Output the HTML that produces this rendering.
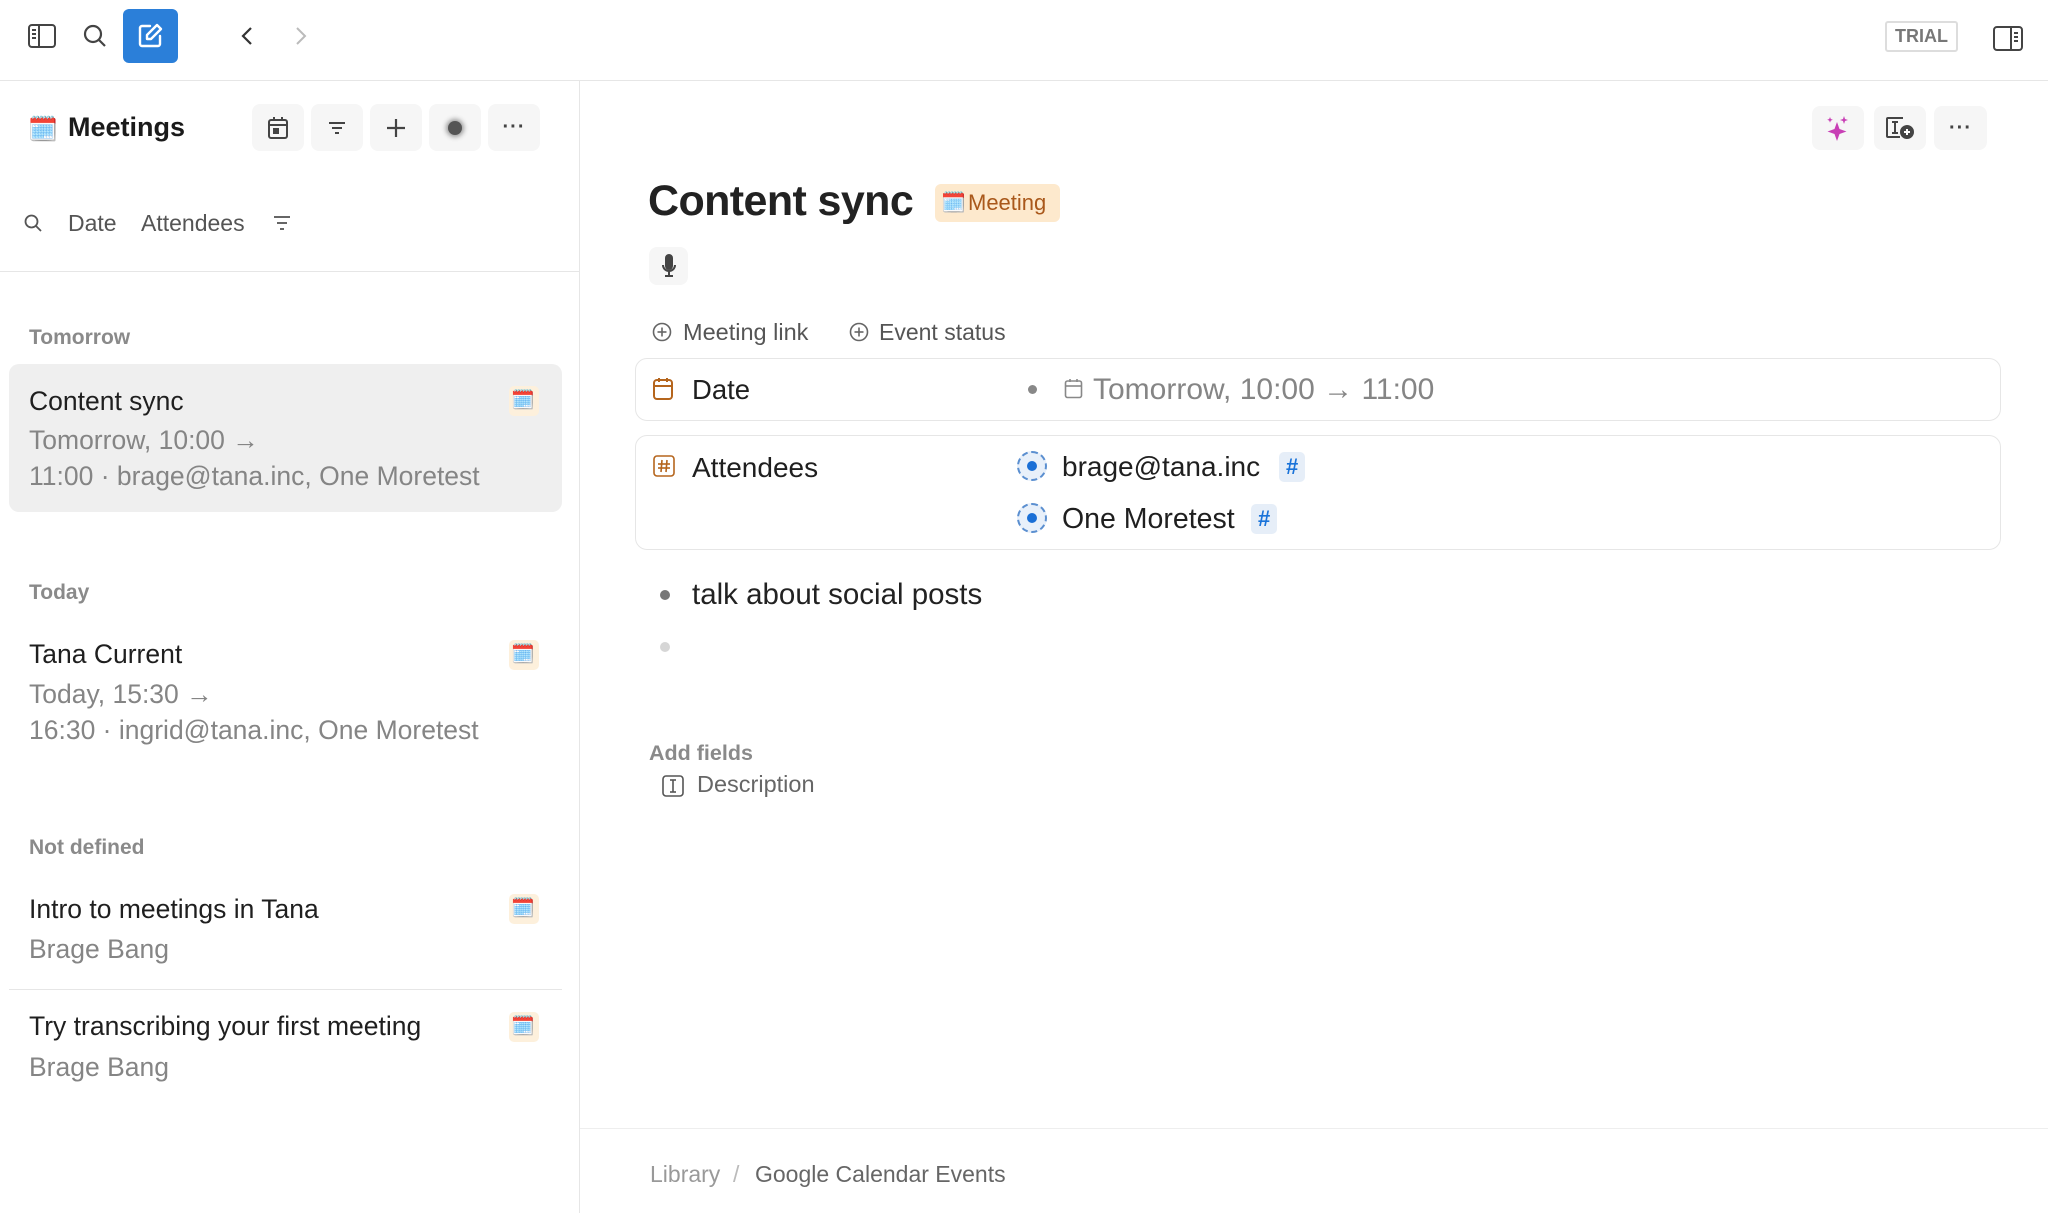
<!DOCTYPE html>
<html><head><meta charset="utf-8"><style>
*{margin:0;padding:0;box-sizing:border-box}
body{width:2048px;height:1213px;background:#fff;font-family:"Liberation Sans",sans-serif;color:#1f1f1f;position:relative;overflow:hidden}
.a{position:absolute;white-space:nowrap}
.btn{position:absolute;background:#f6f6f6;border-radius:8px;display:flex;align-items:center;justify-content:center}
.sec{font-size:21px;font-weight:bold;color:#8a8a8a}
.ttl{font-size:26.5px;color:#1f1f1f}
.sub{font-size:26.5px;color:#858585}
.cal{position:absolute;width:30px;height:30px;background:#fdf0dc;border-radius:5px}
.tag{display:inline-block;background:#e6eef8;color:#1a73d9;font-size:22px;border-radius:5px;padding:2px 7px;font-weight:bold}
</style></head><body>
<svg class="a" style="left:28px;top:24px" width="28" height="24" viewBox="0 0 28 24" fill="none" stroke="#444" stroke-width="2"><rect x="1" y="1" width="26" height="22" rx="3"/><line x1="11" y1="1" x2="11" y2="23"/><line x1="4" y1="6" x2="8" y2="6"/><line x1="4" y1="10" x2="8" y2="10"/><line x1="4" y1="14" x2="8" y2="14"/></svg>
<svg class="a" style="left:83px;top:24px" width="24" height="24" viewBox="0 0 24 24" fill="none" stroke="#444" stroke-width="2.2"><circle cx="10" cy="10" r="8"/><line x1="16" y1="16" x2="22" y2="22"/></svg>
<div class="a" style="left:123px;top:9px;width:55px;height:54px;background:#2b7fd9;border-radius:6px"></div>
<svg class="a" style="left:136px;top:22px" width="28" height="28" viewBox="0 0 28 28" fill="none" stroke="#fff" stroke-width="2.4" stroke-linecap="round" stroke-linejoin="round"><path d="M14 4H6a2 2 0 0 0-2 2v16a2 2 0 0 0 2 2h16a2 2 0 0 0 2-2v-8"/><path d="M21 3l4 4-10 10h-4v-4z"/></svg>
<svg class="a" style="left:240px;top:26px" width="14" height="20" viewBox="0 0 14 20" fill="none" stroke="#333" stroke-width="2.2"><path d="M11 2L3 10l8 8"/></svg>
<svg class="a" style="left:294px;top:26px" width="14" height="20" viewBox="0 0 14 20" fill="none" stroke="#bbb" stroke-width="2"><path d="M3 2l8 8-8 8"/></svg>
<div class="a" style="left:1885px;top:21px;width:73px;height:31px;border:2px solid #ddd;border-radius:3px;font-size:18px;font-weight:bold;color:#777;text-align:center;line-height:27px">TRIAL</div>
<svg class="a" style="left:1993px;top:26px" width="30" height="25" viewBox="0 0 30 25" fill="none" stroke="#444" stroke-width="2"><rect x="1" y="1" width="28" height="23" rx="3"/><line x1="18" y1="1" x2="18" y2="24"/><line x1="21" y1="7" x2="25" y2="7"/><line x1="21" y1="11" x2="25" y2="11"/><line x1="21" y1="15" x2="25" y2="15"/></svg>
<div class="a" style="left:0;top:80px;width:2048px;height:1px;background:#e6e6e6"></div>
<div class="a" style="left:579px;top:81px;width:1px;height:1132px;background:#e6e6e6"></div>

<div class="a" style="left:28px;top:115px;font-size:24px">🗓️</div>
<div class="a" style="left:68px;top:112px;font-size:27px;font-weight:bold;color:#1a1a1a">Meetings</div>
<div class="btn" style="left:252px;top:104px;width:52px;height:47px"><svg width="22" height="24" viewBox="0 0 22 24" fill="none" stroke="#444" stroke-width="2"><rect x="2" y="4" width="18" height="18" rx="2"/><line x1="2" y1="9" x2="20" y2="9"/><line x1="7" y1="1" x2="7" y2="5"/><line x1="15" y1="1" x2="15" y2="5"/><rect x="7" y="13" width="4" height="4" fill="#444"/></svg></div>
<div class="btn" style="left:311px;top:104px;width:52px;height:47px"><svg width="20" height="16" viewBox="0 0 20 16" stroke="#444" stroke-width="2"><line x1="2" y1="3" x2="18" y2="3"/><line x1="5" y1="8" x2="15" y2="8"/><line x1="8" y1="13" x2="12" y2="13"/></svg></div>
<div class="btn" style="left:370px;top:104px;width:52px;height:47px"><svg width="22" height="22" viewBox="0 0 22 22" stroke="#444" stroke-width="2.2"><line x1="11" y1="2" x2="11" y2="20"/><line x1="2" y1="11" x2="20" y2="11"/></svg></div>
<div class="btn" style="left:429px;top:104px;width:52px;height:47px"><div style="width:14px;height:14px;border-radius:50%;background:#555;box-shadow:0 0 5px 2px #999"></div></div>
<div class="btn" style="left:488px;top:104px;width:52px;height:47px;font-size:20px;color:#444;font-weight:bold;letter-spacing:1px">···</div>

<svg class="a" style="left:24px;top:214px" width="18" height="18" viewBox="0 0 18 18" fill="none" stroke="#555" stroke-width="1.8"><circle cx="7.5" cy="7.5" r="6"/><line x1="12" y1="12" x2="17" y2="17"/></svg>
<div class="a" style="left:68px;top:210px;font-size:23px;color:#555">Date</div>
<div class="a" style="left:141px;top:210px;font-size:23px;color:#555">Attendees</div>
<svg class="a" style="left:272px;top:215px" width="20" height="16" viewBox="0 0 20 16" stroke="#555" stroke-width="1.8"><line x1="2" y1="2" x2="18" y2="2"/><line x1="5" y1="8" x2="15" y2="8"/><line x1="8" y1="14" x2="12" y2="14"/></svg>
<div class="a" style="left:0;top:271px;width:579px;height:1px;background:#e6e6e6"></div>

<div class="a sec" style="left:29px;top:326px">Tomorrow</div>
<div class="a" style="left:9px;top:364px;width:553px;height:148px;background:#efefef;border-radius:10px"></div>
<div class="a ttl" style="left:29px;top:386px">Content sync</div>
<div class="a sub" style="left:29px;top:425px">Tomorrow, 10:00 →</div>
<div class="a sub" style="left:29px;top:461px">11:00 · brage@tana.inc, One Moretest</div>
<div class="cal" style="left:509px;top:386px"></div><div class="a" style="left:511px;top:388px;font-size:19px">🗓️</div>

<div class="a sec" style="left:29px;top:581px">Today</div>
<div class="a ttl" style="left:29px;top:639px">Tana Current</div>
<div class="a sub" style="left:29px;top:679px">Today, 15:30 →</div>
<div class="a sub" style="left:29px;top:715px">16:30 · ingrid@tana.inc, One Moretest</div>
<div class="cal" style="left:509px;top:640px"></div><div class="a" style="left:511px;top:642px;font-size:19px">🗓️</div>

<div class="a sec" style="left:29px;top:836px">Not defined</div>
<div class="a ttl" style="left:29px;top:894px">Intro to meetings in Tana</div>
<div class="a sub" style="left:29px;top:934px">Brage Bang</div>
<div class="cal" style="left:509px;top:894px"></div><div class="a" style="left:511px;top:896px;font-size:19px">🗓️</div>
<div class="a" style="left:9px;top:989px;width:553px;height:1px;background:#e6e6e6"></div>
<div class="a ttl" style="left:29px;top:1011px">Try transcribing your first meeting</div>
<div class="a sub" style="left:29px;top:1052px">Brage Bang</div>
<div class="cal" style="left:509px;top:1012px"></div><div class="a" style="left:511px;top:1014px;font-size:19px">🗓️</div>

<div class="btn" style="left:1812px;top:106px;width:52px;height:44px"><svg width="26" height="28" viewBox="0 0 26 28" fill="#c83fb5"><path d="M12 8l2.5 7 7 2.5-7 2.5L12 27l-2.5-7-7-2.5 7-2.5z"/><path d="M19 2l1 3 3 1-3 1-1 3-1-3-3-1 3-1z"/><path d="M5 3l.8 2 2 .8-2 .8L5 8.6 4.2 6.6l-2-.8 2-.8z"/></svg></div>
<div class="btn" style="left:1874px;top:106px;width:52px;height:44px"><svg width="30" height="24" viewBox="0 0 30 24" fill="none" stroke="#444" stroke-width="2"><path d="M18 2H3a1 1 0 0 0-1 1v17a1 1 0 0 0 1 1h12"/><line x1="7" y1="6" x2="13" y2="6"/><line x1="10" y1="6" x2="10" y2="17"/><line x1="7" y1="17" x2="13" y2="17"/><circle cx="22" cy="16" r="6" fill="#444"/><line x1="22" y1="13" x2="22" y2="19" stroke="#fff"/><line x1="19" y1="16" x2="25" y2="16" stroke="#fff"/></svg></div>
<div class="btn" style="left:1934px;top:106px;width:53px;height:44px;font-size:20px;color:#444;font-weight:bold;letter-spacing:1px">···</div>

<div class="a" style="left:648px;top:177px;font-size:43px;font-weight:bold;color:#222;letter-spacing:-0.6px">Content sync</div>
<div class="a" style="left:935px;top:184px;width:125px;height:38px;background:#fde9cd;border-radius:6px"></div>
<div class="a" style="left:941px;top:190px;font-size:20px">🗓️</div>
<div class="a" style="left:968px;top:190px;font-size:22px;color:#a9581b">Meeting</div>
<div class="btn" style="left:649px;top:247px;width:39px;height:38px"><svg width="16" height="24" viewBox="0 0 16 24" fill="none" stroke="#444" stroke-width="2"><rect x="5" y="1" width="6" height="14" rx="3" fill="#444"/><path d="M2 11a6 6 0 0 0 12 0"/><line x1="8" y1="17" x2="8" y2="22"/><line x1="4" y1="22" x2="12" y2="22"/></svg></div>

<svg class="a" style="left:652px;top:322px" width="20" height="20" viewBox="0 0 20 20" fill="none" stroke="#666" stroke-width="1.6"><circle cx="10" cy="10" r="8.5"/><line x1="10" y1="5.5" x2="10" y2="14.5"/><line x1="5.5" y1="10" x2="14.5" y2="10"/></svg>
<div class="a" style="left:683px;top:319px;font-size:23.5px;color:#555">Meeting link</div>
<svg class="a" style="left:849px;top:322px" width="20" height="20" viewBox="0 0 20 20" fill="none" stroke="#666" stroke-width="1.6"><circle cx="10" cy="10" r="8.5"/><line x1="10" y1="5.5" x2="10" y2="14.5"/><line x1="5.5" y1="10" x2="14.5" y2="10"/></svg>
<div class="a" style="left:879px;top:319px;font-size:23px;color:#555">Event status</div>

<div class="a" style="left:635px;top:358px;width:1366px;height:63px;border:1px solid #e6e6e6;border-radius:12px"></div>
<svg class="a" style="left:652px;top:377px" width="22" height="24" viewBox="0 0 22 24" fill="none" stroke="#b5651d" stroke-width="2"><rect x="2" y="3" width="18" height="19" rx="3"/><line x1="2" y1="9" x2="20" y2="9"/><line x1="7" y1="1" x2="7" y2="5"/><line x1="15" y1="1" x2="15" y2="5"/></svg>
<div class="a" style="left:692px;top:374px;font-size:27.5px;color:#1f1f1f">Date</div>
<div class="a" style="left:1028px;top:385px;width:9px;height:9px;border-radius:50%;background:#888"></div>
<svg class="a" style="left:1064px;top:378px" width="19" height="21" viewBox="0 0 19 21" fill="none" stroke="#888" stroke-width="1.6"><rect x="1.5" y="3" width="16" height="16.5" rx="2"/><line x1="1.5" y1="8" x2="17.5" y2="8"/><line x1="6" y1="1" x2="6" y2="4"/><line x1="13" y1="1" x2="13" y2="4"/></svg>
<div class="a" style="left:1093px;top:373px;font-size:30px;color:#858585">Tomorrow, 10:00 → 11:00</div>

<div class="a" style="left:635px;top:435px;width:1366px;height:115px;border:1px solid #e6e6e6;border-radius:12px"></div>
<svg class="a" style="left:653px;top:455px" width="22" height="22" viewBox="0 0 22 22" fill="none" stroke="#b5651d" stroke-width="1.6"><rect x="1" y="1" width="20" height="20" rx="3"/><line x1="9" y1="5" x2="8" y2="17"/><line x1="14" y1="5" x2="13" y2="17"/><line x1="5" y1="9" x2="17" y2="9"/><line x1="5" y1="13" x2="17" y2="13"/></svg>
<div class="a" style="left:692px;top:452px;font-size:28px;color:#1f1f1f">Attendees</div>
<div class="a" style="left:1017px;top:451px;width:30px;height:30px;border-radius:50%;border:2px dashed #5b8fd0;background:#e8f0fa"></div>
<div class="a" style="left:1027px;top:461px;width:10px;height:10px;border-radius:50%;background:#1a6fd6"></div>
<div class="a" style="left:1062px;top:451px;font-size:28px;color:#1f1f1f">brage@tana.inc</div>
<div class="a" style="left:1279px;top:452px"><span class="tag">#</span></div>
<div class="a" style="left:1017px;top:503px;width:30px;height:30px;border-radius:50%;border:2px dashed #5b8fd0;background:#e8f0fa"></div>
<div class="a" style="left:1027px;top:513px;width:10px;height:10px;border-radius:50%;background:#1a6fd6"></div>
<div class="a" style="left:1062px;top:503px;font-size:28.5px;color:#1f1f1f">One Moretest</div>
<div class="a" style="left:1251px;top:504px"><span class="tag">#</span></div>

<div class="a" style="left:660px;top:590px;width:10px;height:10px;border-radius:50%;background:#777"></div>
<div class="a" style="left:692px;top:578px;font-size:29.5px;color:#222">talk about social posts</div>
<div class="a" style="left:660px;top:642px;width:10px;height:10px;border-radius:50%;background:#d6d6d6"></div>

<div class="a" style="left:649px;top:741px;font-size:21.5px;font-weight:bold;color:#8a8a8a">Add fields</div>
<svg class="a" style="left:662px;top:775px" width="22" height="22" viewBox="0 0 22 22" fill="none" stroke="#555" stroke-width="1.6"><rect x="1" y="1" width="20" height="20" rx="3"/><line x1="8" y1="5" x2="14" y2="5"/><line x1="11" y1="5" x2="11" y2="17"/><line x1="8" y1="17" x2="14" y2="17"/></svg>
<div class="a" style="left:697px;top:771px;font-size:23.5px;color:#666">Description</div>

<div class="a" style="left:580px;top:1128px;width:1468px;height:1px;background:#eee"></div>
<div class="a" style="left:650px;top:1161px;font-size:23px;color:#999">Library</div>
<div class="a" style="left:733px;top:1161px;font-size:23px;color:#bbb">/</div>
<div class="a" style="left:755px;top:1161px;font-size:23px;color:#666">Google Calendar Events</div>
</body></html>
